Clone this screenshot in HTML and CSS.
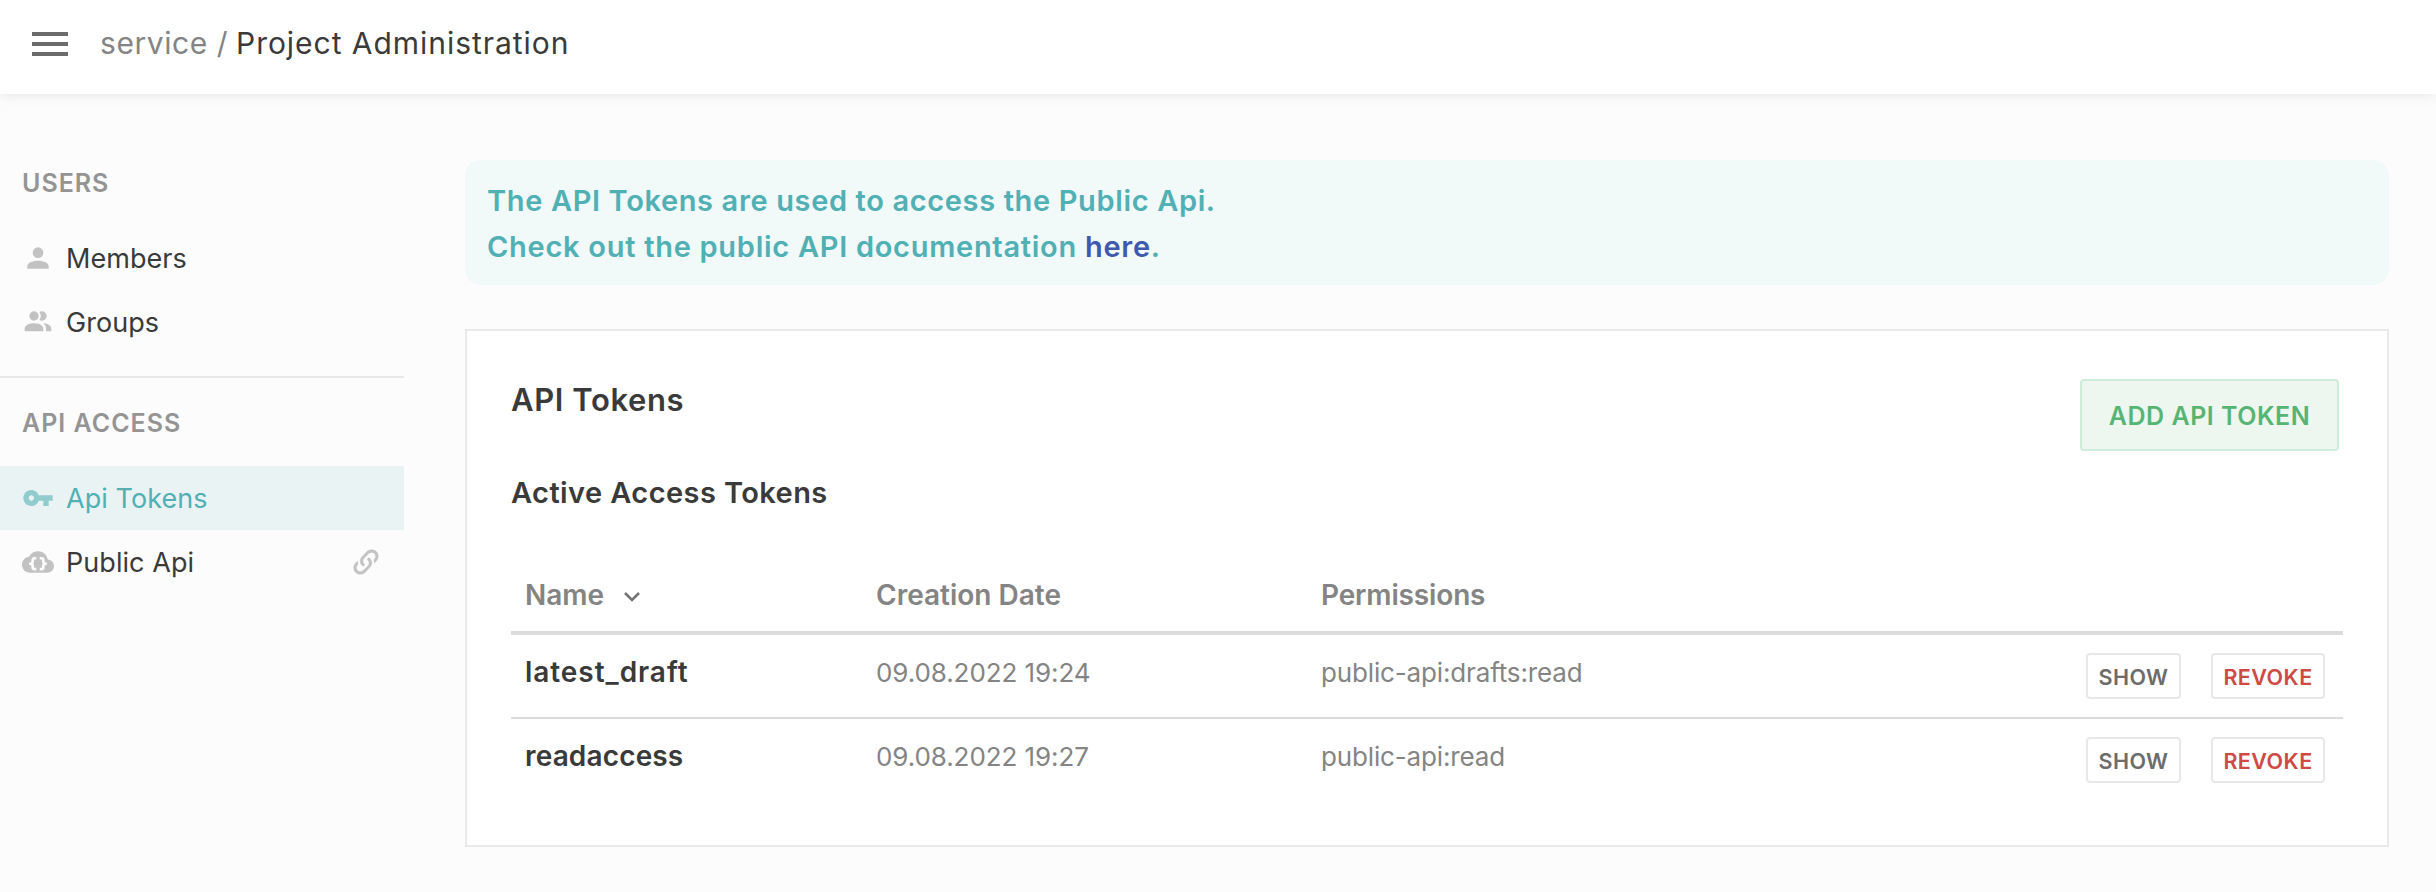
FILE: index.html
```html
<!DOCTYPE html>
<html lang="en">
<head>
<meta charset="utf-8">
<title>Project Administration</title>
<link rel="stylesheet" href="styles.css">
</head>
<body>
<header class="topbar">
  <svg class="menu" viewBox="0 0 36 24"><path d="M0 0h36v4H0zM0 10h36v4H0zM0 20h36v4H0z"/></svg>
  <nav class="crumbs"><span class="crumb">service /</span><span class="crumb current">Project Administration</span></nav>
</header>
<div class="layout">
  <aside class="sidebar">
    <h2 class="group-title">USERS</h2>
    <a class="item"><svg class="icon" viewBox="0 0 24 24"><path d="M12,4A4,4 0 0,1 16,8A4,4 0 0,1 12,12A4,4 0 0,1 8,8A4,4 0 0,1 12,4M12,14C16.42,14 20,15.79 20,18V20H4V18C4,15.79 7.58,14 12,14Z"/></svg><span class="label">Members</span></a>
    <a class="item"><svg class="icon" viewBox="0 0 24 24"><path d="M16 17V19H2V17S2 13 9 13 16 17 16 17M12.5 7.5A3.5 3.5 0 1 0 9 11A3.5 3.5 0 0 0 12.5 7.5M15.94 13A5.32 5.32 0 0 1 18 17V19H22V17S22 13.37 15.94 13M15 4A3.39 3.39 0 0 0 13.07 4.59A5 5 0 0 1 13.07 10.41A3.39 3.39 0 0 0 15 11A3.5 3.5 0 0 0 15 4Z"/></svg><span class="label">Groups</span></a>
    <h2 class="group-title second">API ACCESS</h2>
    <a class="item active"><svg class="icon" viewBox="0 0 24 24"><path d="M7 14C5.9 14 5 13.1 5 12S5.9 10 7 10 9 10.9 9 12 8.1 14 7 14M12.6 10C11.8 7.7 9.6 6 7 6C3.7 6 1 8.7 1 12S3.7 18 7 18C9.6 18 11.8 16.3 12.6 14H16V18H20V14H23V10H12.6Z"/></svg><span class="label">Api Tokens</span></a>
    <a class="item"><svg class="icon" viewBox="0 0 24 24"><path d="M19.35 10.04C18.67 6.59 15.64 4 12 4C9.11 4 6.6 5.64 5.35 8.04C2.34 8.36 0 10.91 0 14C0 17.31 2.69 20 6 20H19C21.76 20 24 17.76 24 15C24 12.36 21.95 10.22 19.35 10.04Z"/><path class="braces" d="M10.7 9.2H9.4Q8 9.2 8 10.6V11.8Q8 13.3 5.4 13.3Q8 13.3 8 14.8V16Q8 17.4 9.4 17.4H10.7M13.3 9.2H14.6Q16 9.2 16 10.6V11.8Q16 13.3 18.6 13.3Q16 13.3 16 14.8V16Q16 17.4 14.6 17.4H13.3"/></svg><span class="label">Public Api</span>
      <svg class="link" viewBox="0 0 24 24"><path d="M10.6 13.4C11 13.8 11 14.4 10.6 14.8C10.2 15.2 9.6 15.2 9.2 14.8C7.2 12.8 7.2 9.7 9.2 7.8L12.7 4.2C14.7 2.3 17.8 2.3 19.8 4.2C21.7 6.2 21.7 9.3 19.8 11.3L18.3 12.8C18.3 12 18.2 11.1 17.9 10.4L18.3 9.9C19.5 8.7 19.5 6.8 18.3 5.7C17.2 4.5 15.3 4.5 14.1 5.7L10.6 9.2C9.4 10.3 9.4 12.2 10.6 13.4M13.4 9.2C13.8 8.8 14.4 8.8 14.8 9.2C16.8 11.2 16.8 14.3 14.8 16.2L11.3 19.8C9.3 21.7 6.2 21.7 4.2 19.8C2.3 17.8 2.3 14.7 4.2 12.7L5.7 11.2C5.7 12 5.8 12.9 6.1 13.6L5.7 14.1C4.5 15.3 4.5 17.2 5.7 18.3C6.8 19.5 8.7 19.5 9.9 18.3L13.4 14.8C14.6 13.7 14.6 11.8 13.4 10.6C13 10.2 13 9.6 13.4 9.2Z"/></svg></a>
  </aside>
  <main class="content">
    <p class="notice">The API Tokens are used to access the Public Api.<br><span class="doc-line">Check out the public API documentation <a class="doc-link">here</a>.</span></p>
    <section class="card">
      <div class="card-head">
        <div>
          <h1 class="title">API Tokens</h1>
          <h2 class="subtitle">Active Access Tokens</h2>
        </div>
        <button class="add">ADD API TOKEN</button>
      </div>
      <div class="table">
        <div class="row head"><span>Name<svg class="chevron" viewBox="0 0 16 12"><path d="M1 2l7 7 7-7"/></svg></span><span>Creation Date</span><span class="perm">Permissions</span></div>
        <div class="row"><span class="name wide">latest_draft</span><span>09.08.2022 19:24</span><span class="perm">public-api:drafts:read</span><div class="actions"><button class="btn">SHOW</button><button class="btn danger">REVOKE</button></div></div>
        <div class="row"><span class="name">readaccess</span><span>09.08.2022 19:27</span><span class="perm">public-api:read</span><div class="actions"><button class="btn">SHOW</button><button class="btn danger">REVOKE</button></div></div>
      </div>
    </section>
  </main>
</div>
</body>
</html>
```
FILE: styles.css
```css
* { box-sizing: border-box; margin: 0; padding: 0; }
body { min-height: 892px; background: #fcfcfc; color: #3a3a3a; font: 400 28px/32px Inter, sans-serif; }
.topbar { display: flex; align-items: center; height: 94px; padding: 0 32px 6px; background: #fff; box-shadow: 0 2px 12px rgba(0,0,0,.08); }
.menu { width: 36px; height: 24px; margin-right: 32px; fill: #6c6c6c; }
.crumbs { display: flex; gap: 8px; padding-bottom: 2px; font-size: 30px; line-height: 36px; }
.crumb { color: #848484; letter-spacing: .55px; }
.crumb.current { color: #3a3a3a; letter-spacing: .96px; }
.layout { display: flex; }
.sidebar { width: 404px; padding-top: 73px; }
.group-title { padding-left: 22px; font-size: 25px; line-height: 32px; font-weight: 600; letter-spacing: 1px; color: #949494; margin-bottom: 27px; }
.group-title.second { margin-top: 22px; border-top: 2px solid #e8e8e8; padding-top: 29px; }
.item { display: flex; align-items: center; height: 64px; padding: 0 22px; }
.label { padding-top: 1px; font-size: 27px; letter-spacing: .06px; }
.icon { width: 32px; height: 32px; margin-right: 12px; fill: #c2c2c2; }
.braces { fill: none; stroke: #fcfcfc; stroke-width: 2; }
.item.active { background: #eaf3f4; color: #50b0b3; }
.item.active .icon { fill: #90cccd; }
.link { width: 32px; height: 32px; margin-left: auto; fill: #c2c2c2; stroke: #c2c2c2; stroke-width: .3; }
.content { width: 1924px; margin-left: 61px; padding-top: 66px; }
.notice { height: 125px; padding: 18px 22px; border-radius: 16px; background: #f1f9f9; color: #50b0b3; font-size: 29px; line-height: 46px; font-weight: 600; letter-spacing: .64px; }
.doc-line { letter-spacing: .72px; }
.doc-link { color: #3f59ae; }
.card { height: 518px; margin-top: 44px; padding: 48px 44px; background: #fff; border: 2px solid #e9e9e9; }
.card-head { display: flex; justify-content: space-between; align-items: flex-start; height: 186px; }
.title { padding-top: 1px; font-size: 31px; line-height: 40px; font-weight: 600; letter-spacing: .6px; }
.subtitle { margin-top: 55px; font-size: 29px; line-height: 36px; font-weight: 600; letter-spacing: .42px; }
.add { width: 259px; height: 72px; margin-right: 4px; padding-top: 2px; border: 2px solid #cfecdb; border-radius: 4px; background: #edf7f0; color: #57b574; font: 600 25px/32px Inter, sans-serif; letter-spacing: .5px; }
.table { width: 1832px; }
.row { display: grid; grid-template-columns: 351px 445px 600px 1fr; height: 84px; padding: 22px 18px 0 14px; font-size: 26px; line-height: 32px; color: #848484; letter-spacing: -.08px; border-bottom: 2px solid #dcdcdc; }
.row:last-child { border-bottom: 0; }
.row.head { height: 70px; padding-top: 14px; font-size: 28px; font-weight: 600; letter-spacing: 0; border-bottom: 4px solid #dcdcdc; }
.perm { letter-spacing: -.15px; }
.chevron { width: 16px; height: 12px; margin: 0 0 2px 20px; fill: none; stroke: #747474; stroke-width: 2.6; }
.name { margin-top: -1px; font-size: 28px; font-weight: 600; color: #3a3a3a; letter-spacing: .15px; }
.name.wide { letter-spacing: .95px; }
.actions { display: flex; justify-content: flex-end; gap: 30px; margin-top: -4px; }
.btn { width: 95px; height: 46px; padding-top: 2px; border: 2px solid #e8e8e8; border-radius: 4px; background: #fff; color: #6c6c6c; font: 600 21.5px/28px Inter, sans-serif; letter-spacing: .45px; }
.btn.danger { width: 114px; color: #cf4a44; }
```
